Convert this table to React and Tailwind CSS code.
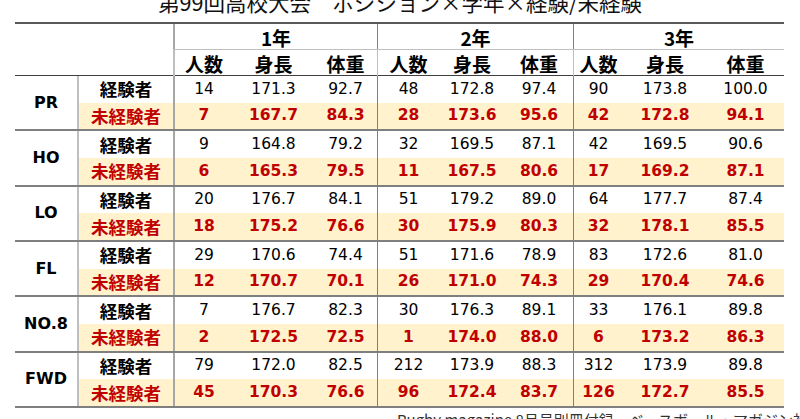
import React from 'react';

const COLS = 'grid-cols-[62px_96px_60px_81px_63px_62px_66px_68px_50px_84px_77px]';
const JP = "font-['Noto_Sans_CJK_JP','Noto_Sans',sans-serif]";
const NUM = "font-['DejaVu_Sans','Liberation_Sans',sans-serif]";

const groups = [
  { pos: 'PR', exp: ['14', '171.3', '92.7', '48', '172.8', '97.4', '90', '173.8', '100.0'], inexp: ['7', '167.7', '84.3', '28', '173.6', '95.6', '42', '172.8', '94.1'] },
  { pos: 'HO', exp: ['9', '164.8', '79.2', '32', '169.5', '87.1', '42', '169.5', '90.6'], inexp: ['6', '165.3', '79.5', '11', '167.5', '80.6', '17', '169.2', '87.1'] },
  { pos: 'LO', exp: ['20', '176.7', '84.1', '51', '179.2', '89.0', '64', '177.7', '87.4'], inexp: ['18', '175.2', '76.6', '30', '175.9', '80.3', '32', '178.1', '85.5'] },
  { pos: 'FL', exp: ['29', '170.6', '74.4', '51', '171.6', '78.9', '83', '172.6', '81.0'], inexp: ['12', '170.7', '70.1', '26', '171.0', '74.3', '29', '170.4', '74.6'] },
  { pos: 'NO.8', exp: ['7', '176.7', '82.3', '30', '176.3', '89.1', '33', '176.1', '89.8'], inexp: ['2', '172.5', '72.5', '1', '174.0', '88.0', '6', '173.2', '86.3'] },
  { pos: 'FWD', exp: ['79', '172.0', '82.5', '212', '173.9', '88.3', '312', '173.9', '89.8'], inexp: ['45', '170.3', '76.6', '96', '172.4', '83.7', '126', '172.7', '85.5'] },
];

// border on the left of the first column of each grade
function edge(i) {
  if (i === 0) return 'border-l-2 border-[#a6a6a6]';
  if (i === 3 || i === 6) return 'border-l border-[#7f7f7f]';
  return '';
}

function Group({ g }) {
  return (
    <div className={`grid ${COLS} grid-rows-2 h-[55.33px] border-b-2 border-[#7f7f7f]`}>
      <div className={`row-span-2 flex items-center justify-center text-[16px] font-bold text-black ${NUM}`}>
        {g.pos}
      </div>
      <div className={`flex items-center justify-center border-l-2 border-[#bfbfbf] text-[17.5px] font-bold text-black ${JP}`}>
        経験者
      </div>
      {g.exp.map((v, i) => (
        <div key={i} className={`flex items-center justify-center text-[15.5px] text-black ${NUM} ${edge(i)}`}>
          {v}
        </div>
      ))}
      <div className={`flex items-center justify-center border-l-2 border-[#bfbfbf] bg-[#fff2cc] text-[17.5px] font-bold text-[#c00000] ${JP}`}>
        未経験者
      </div>
      {g.inexp.map((v, i) => (
        <div key={i} className={`flex items-center justify-center bg-[#fff2cc] text-[15.5px] font-bold text-[#c00000] ${NUM} ${edge(i)}`}>
          {v}
        </div>
      ))}
    </div>
  );
}

export default function App() {
  const sub = ['人数', '身長', '体重'];
  return (
    <div className="w-[800px] h-[419px] overflow-hidden bg-white">
      <div className={`mt-[-9px] h-[31px] text-center text-[21.5px] leading-none text-[#111] ${JP}`}>
        第99回高校大会　ポジション×学年×経験/未経験
      </div>
      <div className="ml-[15px] w-[769px]">
        <div className="border-t-2 border-[#595959]">
          <div className="grid grid-cols-[158px_204px_196px_211px] h-[25px]">
            <div />
            {['1年', '2年', '3年'].map((y, i) => (
              <div key={y} className={`flex items-center justify-center text-[19px] font-bold text-black ${JP} ${i === 0 ? 'border-l-2 border-[#a6a6a6]' : 'border-l border-[#7f7f7f]'}`}>
                {y}
              </div>
            ))}
          </div>
          <div className={`grid ${COLS} h-[27px] border-b border-[#404040]`}>
            <div />
            <div />
            {[0, 1, 2, 3, 4, 5, 6, 7, 8].map((i) => (
              <div key={i} className={`flex items-center justify-center border-t border-[#bfbfbf] text-[19px] font-bold text-black ${JP} ${edge(i)}`}>
                {sub[i % 3]}
              </div>
            ))}
          </div>
        </div>
        {groups.map((g) => (
          <Group key={g.pos} g={g} />
        ))}
      </div>
      <div className={`pl-[397px] pt-[4px] text-[15px] leading-none text-[#333] whitespace-nowrap ${JP}`}>
        Rugby magazine 8月号別冊付録　ベースボール・マガジン社
      </div>
    </div>
  );
}
